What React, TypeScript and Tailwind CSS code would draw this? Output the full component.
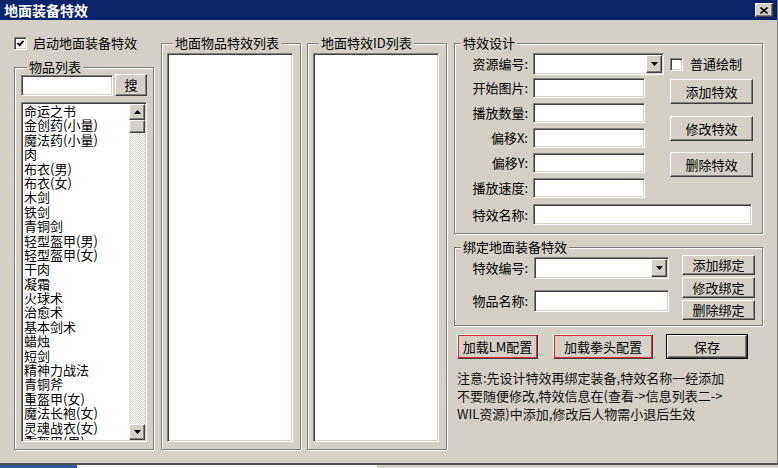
import type { ReactNode } from "react";

const font = { fontFamily: '"Noto Sans CJK SC", "Noto Sans", sans-serif' };

const items = [
  "命运之书",
  "金创药(小量)",
  "魔法药(小量)",
  "肉",
  "布衣(男)",
  "布衣(女)",
  "木剑",
  "铁剑",
  "青铜剑",
  "轻型盔甲(男)",
  "轻型盔甲(女)",
  "干肉",
  "凝霜",
  "火球术",
  "治愈术",
  "基本剑术",
  "蜡烛",
  "短剑",
  "精神力战法",
  "青铜斧",
  "重盔甲(女)",
  "魔法长袍(女)",
  "灵魂战衣(女)",
  "重盔甲(男)",
];

const raised =
  "border border-t-white border-l-white border-r-[#404040] border-b-[#404040] shadow-[inset_-1px_-1px_0_#808080,inset_1px_1px_0_#d4d0c8] bg-[#d4d0c8]";
const sunken =
  "border border-t-[#808080] border-l-[#808080] border-b-white border-r-white shadow-[inset_1px_1px_0_#404040,inset_-1px_-1px_0_#d4d0c8] bg-white";

function Group({ title, className, children }: { title: string; className: string; children?: ReactNode }) {
  return (
    <fieldset
      className={`border border-[#808080] shadow-[inset_1px_1px_0_#fff,1px_1px_0_#fff] ${className}`}
    >
      <legend className="ml-[6px] bg-[#d4d0c8] px-[2px] text-[13px] leading-[14px]">{title}</legend>
      {children}
    </fieldset>
  );
}

function Button({ label, className = "" }: { label: string; className?: string }) {
  return (
    <div className={`flex items-center justify-center text-[13px] ${raised} ${className}`}>
      {label}
    </div>
  );
}

function Arrow({ up = false }: { up?: boolean }) {
  return (
    <svg width="7" height="4" viewBox="0 0 7 4">
      <polygon points={up ? "0,4 7,4 3.5,0" : "0,0 7,0 3.5,4"} fill="#000" />
    </svg>
  );
}

function Combo({ className }: { className: string }) {
  return (
    <div className={`flex p-[1px] ${sunken} ${className}`}>
      <div className="flex-1" />
      <div className={`flex w-[16px] items-center justify-center ${raised}`}>
        <Arrow />
      </div>
    </div>
  );
}

function Check({ checked = false }: { checked?: boolean }) {
  return (
    <div className={`flex h-[13px] w-[13px] shrink-0 items-center justify-center ${sunken}`}>
      {checked && (
        <svg width="9" height="9" viewBox="0 0 9 9">
          <polyline points="1.5,4 3.5,6.2 7.5,1.8" fill="none" stroke="#000" strokeWidth="1.8" />
        </svg>
      )}
    </div>
  );
}

function Row({ label, children }: { label: string; children: ReactNode }) {
  return (
    <div className="flex items-center">
      <span className="w-[76px] whitespace-nowrap pr-[3px] text-right text-[13px] leading-[14px]">
        {label}
      </span>
      {children}
    </div>
  );
}

export default function App() {
  return (
    <div style={font} className="w-[778px] h-[468px] overflow-hidden bg-[#d4d0c8] text-black">
      <div className="flex h-[465px] flex-col border-r border-b-2 border-r-[#808080] border-b-[#505050]">
        <div className="flex h-[20px] shrink-0 items-center justify-between bg-[#0a246a] pl-[4px] pr-[4px]">
          <span className="text-[14px] font-bold leading-[16px] text-white">地面装备特效</span>
          <div className={`flex h-[14px] w-[18px] items-center justify-center ${raised}`}>
            <svg width="8" height="7" viewBox="0 0 8 7">
              <path d="M0.5 0.5 L7.5 6.5 M7.5 0.5 L0.5 6.5" stroke="#000" strokeWidth="1.6" />
            </svg>
          </div>
        </div>

        <div className="flex items-start pl-[14px]">
          {/* left column */}
          <div className="flex w-[140px] flex-col">
            <div className="mt-[16px] flex h-[14px] items-center">
              <Check checked />
              <span className="ml-[6px] text-[13px] leading-[14px]">启动地面装备特效</span>
            </div>
            <Group title="物品列表" className="mt-[10px] h-[390px] w-[140px] px-[6px]">
              <div className="flex items-start">
                <div className={`mt-[1px] h-[21px] w-[92px] ${sunken}`} />
                <Button label="搜" className="ml-[2px] h-[22px] w-[32px]" />
              </div>
              <div className={`mt-[6px] flex h-[340px] w-[126px] p-[1px] ${sunken}`}>
                <div className="flex-1 overflow-hidden pl-[1px]">
                  {items.map((it) => (
                    <div key={it} className="h-[14.4px] whitespace-nowrap text-[13px] leading-[14.4px]">
                      {it}
                    </div>
                  ))}
                </div>
                <div className="flex w-[16px] flex-col">
                  <div className={`flex h-[16px] items-center justify-center ${raised}`}>
                    <Arrow up />
                  </div>
                  <div className={`h-[13px] ${raised}`} />
                  <div className="flex-1 bg-[repeating-conic-gradient(#ffffff_0_25%,#d4d0c8_0_50%)] bg-[length:2px_2px]" />
                  <div className={`flex h-[16px] items-center justify-center ${raised}`}>
                    <Arrow />
                  </div>
                </div>
              </div>
            </Group>
          </div>

          {/* middle lists */}
          <Group title="地面物品特效列表" className="ml-[7px] mt-[16px] h-[414px] w-[140px] pl-[5px]">
            <div className={`mt-[3px] h-[389px] w-[126px] ${sunken}`} />
          </Group>
          <Group title="地面特效ID列表" className="ml-[6px] mt-[16px] h-[414px] w-[140px] pl-[5px]">
            <div className={`mt-[3px] h-[389px] w-[126px] ${sunken}`} />
          </Group>

          {/* right column */}
          <div className="ml-[7px] flex w-[309px] flex-col">
            <Group title="特效设计" className="mt-[16px] h-[198px] w-[309px]">
              <div className="mt-[3px] flex items-center">
                <Row label="资源编号:">
                  <Combo className="ml-[2px] h-[22px] w-[131px]" />
                </Row>
                <div className="ml-[6px]">
                  <Check />
                </div>
                <span className="ml-[7px] text-[13px] leading-[14px]">普通绘制</span>
              </div>
              <div className="mt-[3px] flex items-start">
                <div className="flex flex-col gap-[5px]">
                  {["开始图片:", "播放数量:", "偏移X:", "偏移Y:", "播放速度:"].map((l) => (
                    <Row key={l} label={l}>
                      <div className={`ml-[2px] h-[20px] w-[112px] ${sunken}`} />
                    </Row>
                  ))}
                </div>
                <div className="ml-[25px] mt-[1px] flex flex-col">
                  <Button label="添加特效" className="h-[25px] w-[83px]" />
                  <Button label="修改特效" className="mt-[12px] h-[25px] w-[83px]" />
                  <Button label="删除特效" className="mt-[11px] h-[25px] w-[83px]" />
                </div>
              </div>
              <div className="mt-[6px]">
                <Row label="特效名称:">
                  <div className={`ml-[2px] h-[21px] w-[219px] ${sunken}`} />
                </Row>
              </div>
            </Group>

            <Group title="绑定地面装备特效" className="mt-[6px] h-[86px] w-[309px]">
              <div className="flex items-start">
                <div className="flex flex-col">
                  <div className="mt-[3px]">
                    <Row label="特效编号:">
                      <Combo className="ml-[3px] h-[22px] w-[135px]" />
                    </Row>
                  </div>
                  <div className="mt-[11px]">
                    <Row label="物品名称:">
                      <div className={`ml-[3px] h-[22px] w-[135px] ${sunken}`} />
                    </Row>
                  </div>
                </div>
                <div className="ml-[13px] mt-[1px] flex flex-col gap-[2px]">
                  <Button label="添加绑定" className="h-[20px] w-[73px]" />
                  <Button label="修改绑定" className="h-[21px] w-[73px]" />
                  <Button label="删除绑定" className="h-[20px] w-[73px]" />
                </div>
              </div>
            </Group>

            <div className="ml-[3px] mt-[8px] flex">
              <Button
                label="加载LM配置"
                className="h-[25px] w-[81px] outline outline-1 outline-offset-[-2px] outline-[#e0282e]"
              />
              <Button
                label="加载拳头配置"
                className="ml-[15px] h-[25px] w-[100px] outline outline-1 outline-offset-[-2px] outline-[#e0282e]"
              />
              <div className="ml-[13px] h-[25px] w-[82px] border border-black">
                <Button label="保存" className="h-full w-full" />
              </div>
            </div>

            <div className="ml-[3px] mt-[10px] whitespace-nowrap text-[13px] leading-[18px] text-[#111]">
              <div>注意:先设计特效再绑定装备,特效名称一经添加</div>
              <div>不要随便修改,特效信息在(查看-&gt;信息列表二-&gt;</div>
              <div>WIL资源)中添加,修改后人物需小退后生效</div>
            </div>
          </div>
        </div>
      </div>
      <div className="flex h-[3px]">
        <div className="w-[77px] bg-[#2a5a9a]" />
        <div className="w-[300px] bg-white" />
        <div className="flex-1 bg-[#d4d0c8]" />
      </div>
    </div>
  );
}
